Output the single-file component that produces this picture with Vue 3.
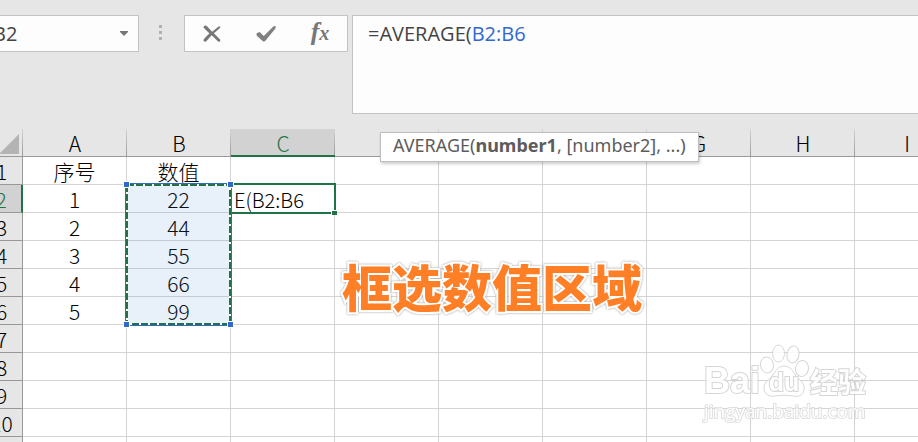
<script setup>
import { ref, computed } from 'vue'

const cellName = ref('B2')
const formula = ref('=AVERAGE(B2:B6')
const editing = ref('E(B2:B6')

const columns = 'ABCDEFGHIJKL'.split('')
const rowCount = 20

const cells = {
  A1: '序号', B1: '数值',
  A2: '1', B2: '22',
  A3: '2', B3: '44',
  A4: '3', B4: '55',
  A5: '4', B5: '66',
  A6: '5', B6: '99',
}

const handles = [[1, 1], [105, 1], [1, 141], [105, 141]]

// split the formula so that references can be coloured
const tokens = computed(() =>
  formula.value
    .split(/([A-Z]+\d+(?::[A-Z]+\d+)?)/)
    .filter(Boolean)
    .map((text) => ({ text, isRef: /^[A-Z]+\d/.test(text) }))
)
</script>

<template>
  <div class="app">
    <header class="formula-bar">
      <div class="name-box">
        <input v-model="cellName" type="text" aria-label="Name box" />
        <button type="button" aria-label="Open name list">
          <svg width="8" height="5" viewBox="0 0 8 5"><path d="M0 0h8v1L4 5 0 1z" fill="#777" /></svg>
        </button>
      </div>

      <div class="grip"><i></i><i></i><i></i></div>

      <div class="actions">
        <button type="button" aria-label="Cancel">
          <svg width="20" height="20" viewBox="0 0 20 20">
            <path d="M1.500 3.600C1.700 1.600 3.800 1 5 2.300l5.200 5.500L16.600 2.400l1.800.2L18 4l-6.100 5.200 6.400 6.600-.2 1.900-2-.1-6.400-6.300-5.200 5.600c-1.200 1.200-2.900 1-3-.8 1.400-2.400 3.500-4.400 6-6.600z" fill="#777" />
          </svg>
        </button>
        <button type="button" aria-label="Enter">
          <svg width="20" height="20" viewBox="0 0 20 20">
            <path d="M.6 9.200 3.600 8l4.200 4L17.600 2.200l2-.2v2.300L9.600 16.600 7.900 17.800 6 16.600.6 11.400z" fill="#808080" />
          </svg>
        </button>
        <button type="button" class="fx" aria-label="Insert function"><span>f</span><sub>x</sub></button>
      </div>

      <div class="editor">
        <div class="mirror" aria-hidden="true"><span v-for="(t, i) in tokens" :key="i" :class="{ reference: t.isRef }">{{ t.text }}</span></div>
        <textarea v-model="formula" aria-label="Formula" spellcheck="false"></textarea>
      </div>
    </header>

    <main class="sheet">
      <table>
        <thead>
          <tr>
            <th class="corner">
              <svg width="24" height="20" viewBox="0 0 24 20"><path d="M24 0v20H4z" fill="#b4b4b4" /></svg>
            </th>
            <th v-for="col in columns" :key="col" scope="col" :class="{ active: col === 'C' }">{{ col }}</th>
          </tr>
        </thead>
        <tbody>
          <tr v-for="row in rowCount" :key="row">
            <th scope="row" :class="{ active: row === 2 }">{{ row }}</th>
            <td v-for="col in columns" :key="col">
              <div v-if="col + row === 'C2'" class="edit-cell">
                <input v-model="editing" type="text" aria-label="Cell C2" spellcheck="false" />
                <i></i>
              </div>
              <template v-else>{{ cells[col + row] }}</template>
            </td>
          </tr>
        </tbody>
      </table>

      <svg class="marquee" width="111" height="147" viewBox="0 0 111 147" shape-rendering="crispEdges">
        <rect x="3" y="3" width="105" height="141" fill="#4383d6" fill-opacity=".12" />
        <rect x="2.5" y="2.5" width="106" height="142" fill="none" stroke="#2f6ac6" />
        <rect x="4" y="4" width="103" height="139" fill="none" stroke="#fff" stroke-width="2" />
        <rect x="4" y="4" width="103" height="139" fill="none" stroke="#217346" stroke-width="2" stroke-dasharray="7 2" />
        <rect v-for="([x, y], i) in handles" :key="i" :x="x - .5" :y="y - .5" width="6" height="6" fill="#2f6ac6" stroke="#fff" />
      </svg>

      <div class="hint" role="tooltip">AVERAGE(<b>number1</b>, [number2], ...)</div>
      <p class="caption">框选数值区域</p>

      <div class="watermark">
        <div class="brand">
          <span>Bai</span>
          <svg width="50" height="54" viewBox="0 0 50 54">
            <g fill="#fff" stroke="#cfcfcf">
              <ellipse cx="7" cy="21" rx="6.500" ry="8" transform="rotate(-8 7 21)" />
              <ellipse cx="18.500" cy="9.500" rx="6" ry="8.500" />
              <ellipse cx="33" cy="10.500" rx="6" ry="8.500" transform="rotate(10 33 10.500)" />
              <ellipse cx="42" cy="24.500" rx="6.500" ry="8" transform="rotate(8 42 24.500)" />
              <path d="M24 22c7 0 9 6 13 11 4 4 8 7 7 13-1 6-6 7-11 6-6-1-12-1-18 0-6 1-11-2-11-8 0-5 4-8 8-12 4-5 6-10 12-10z" />
            </g>
            <text x="24" y="47" text-anchor="middle">du</text>
          </svg>
          <span class="cn">经验</span>
        </div>
        <div class="url">jingyan.baidu.com</div>
      </div>
    </main>
  </div>
</template>

<style>
body {
  margin: 0;
  overflow: hidden;
}
</style>

<style scoped>
.app {
  display: flex;
  flex-direction: column;
  height: 100vh;
  overflow: hidden;
  background: #e6e6e6;
  font-family: "Noto Sans CJK SC", sans-serif;
  color: #000;
}

input,
textarea,
button {
  margin: 0;
  padding: 0;
  border: 0;
  outline: none;
  background: none;
  font: inherit;
  color: inherit;
}

button {
  cursor: pointer;
}

.formula-bar {
  display: flex;
  align-items: flex-start;
  padding: 15px 0;
}

.name-box,
.actions,
.editor {
  box-sizing: border-box;
  border: 1px solid #c3c3c3;
  background: #fdfdfd;
}

.name-box {
  display: flex;
  width: 151px;
  height: 37px;
  margin-left: -12px;
  font: 20px "Open Sans", sans-serif;
  color: #444;
}

.name-box input {
  flex: 1;
  min-width: 0;
  padding-left: 4px;
}

.name-box button {
  display: flex;
  align-items: center;
  justify-content: center;
  width: 28px;
}

.grip {
  display: flex;
  flex-direction: column;
  gap: 3px;
  margin: 10px 22px 0 20px;
}

.grip i {
  width: 3px;
  height: 3px;
  background: #b0b0b0;
}

.actions {
  display: flex;
  width: 164px;
  height: 37px;
  margin-right: 4px;
}

.actions button {
  display: flex;
  flex: 1;
  align-items: center;
  justify-content: center;
}

.actions .fx {
  align-items: baseline;
  font: italic bold 26px/32px "Liberation Serif", serif;
  color: #777;
}

.fx sub {
  font-size: 20px;
  line-height: 20px;
  vertical-align: baseline;
}

.editor {
  display: grid;
  flex: 1;
  height: 99px;
  border-right: 0;
  font: 20px/24px "Open Sans", sans-serif;
  color: #444;
}

.mirror,
.editor textarea {
  grid-area: 1 / 1;
  padding: 6px 15px;
  white-space: pre-wrap;
}

.editor textarea {
  resize: none;
  color: transparent;
  caret-color: #444;
}

.reference {
  color: #3367d1;
}

.sheet {
  position: relative;
  flex: 1;
  overflow: hidden;
}

table {
  width: 1290px;
  margin-left: -19px;
  table-layout: fixed;
  border-spacing: 0;
  font-size: 21px;
  font-weight: 300;
  line-height: 25px;
}

th,
td {
  box-sizing: border-box;
  height: 28px;
  padding: 2px 0 0;
  border-right: 1px solid #d4d4d4;
  border-bottom: 1px solid #d4d4d4;
  text-align: center;
  font-weight: inherit;
}

td {
  background: #fff;
}

thead th {
  border-right: 0;
  border-bottom-color: #999;
  background: linear-gradient(#d4d4d4, #999) right / 1px 100% no-repeat #e6e6e6;
}

thead .active {
  border-bottom: 2px solid #217346;
  background-color: #d2d2d2;
  line-height: 24px;
  color: #217346;
}

thead .corner {
  width: 42px;
  padding-right: 4px;
}

.corner svg {
  display: block;
  margin-left: auto;
}

tbody th {
  border-right-color: #999;
  border-bottom-color: #999;
  background: #e6e6e6;
}

tbody .active {
  border-right: 2px solid #217346;
  background: #d2d2d2;
  color: #217346;
}

.edit-cell {
  position: relative;
  height: 25px;
}

.edit-cell input {
  position: absolute;
  inset: -4px auto -2px -1px;
  box-sizing: border-box;
  width: 106px;
  padding: 1px 0 0 3px;
  border: 2px solid #217346;
  border-left-width: 1px;
  background: #fff;
  font-size: 20px;
}

.edit-cell i {
  position: absolute;
  right: -3px;
  bottom: -3px;
  width: 5px;
  height: 4px;
  border: solid #fff;
  border-width: 1px 0 0 1px;
  background: #217346;
}

.marquee {
  position: absolute;
  top: 52px;
  left: 123px;
}

.hint {
  position: absolute;
  top: 3px;
  left: 380px;
  padding: 0 12px 4px;
  border: 1px solid #bebebe;
  background: #fff;
  box-shadow: 1px 2px 3px rgba(0, 0, 0, .2);
  font: 18px/24px "Noto Sans", sans-serif;
  white-space: nowrap;
  color: #5c5c5c;
}

.caption {
  position: absolute;
  top: 123px;
  left: 342px;
  margin: 0;
  font-size: 50px;
  font-weight: 900;
  line-height: 66px;
  white-space: nowrap;
  color: #ff7f27;
  -webkit-text-stroke: 4px #fff;
  paint-order: stroke fill;
  filter: drop-shadow(0 0 1px #999);
}

.watermark {
  position: absolute;
  right: 52px;
  bottom: 18px;
  color: #fff;
  opacity: .85;
}

.brand {
  display: flex;
  align-items: flex-end;
  height: 54px;
}

.brand span,
.brand text {
  font: bold 36px/34px "Liberation Sans", sans-serif;
  -webkit-text-stroke: 2px #cfcfcf;
  paint-order: stroke fill;
}

.brand text {
  font-size: 25px;
  fill: #fff;
  stroke: #cfcfcf;
  stroke-width: 2px;
}

.brand .cn {
  font: bold 28px/34px "Noto Sans CJK SC", sans-serif;
}

.url {
  font: 19px/26px "Open Sans", sans-serif;
  -webkit-text-stroke: 2px #dadada;
  paint-order: stroke fill;
}
</style>
